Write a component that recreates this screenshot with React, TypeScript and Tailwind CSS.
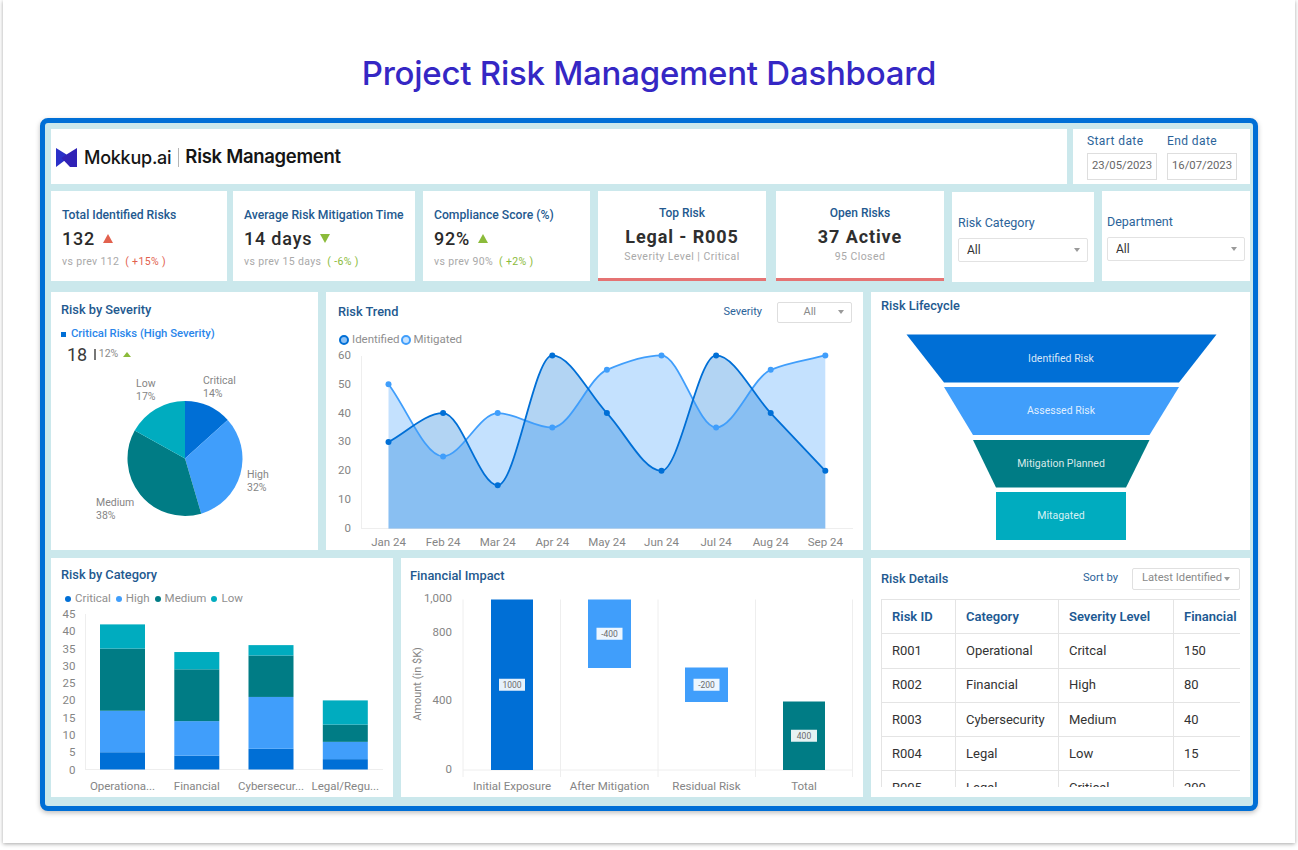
const DARK = '#006fd6';
const LIGHT = '#409efb';
const TEAL = '#007c85';
const CYAN = '#00acbf';

const titleCls = 'font-medium text-[12.8px] text-[#23598f]';

// monotone cubic through the points, flat at local peaks
function spline(pts: number[][]) {
  const n = pts.length;
  const d: number[] = [];
  for (let i = 0; i < n - 1; i++) d.push((pts[i + 1][1] - pts[i][1]) / (pts[i + 1][0] - pts[i][0]));
  const m: number[] = [d[0]];
  for (let i = 1; i < n - 1; i++) m.push(d[i - 1] * d[i] <= 0 ? 0 : (2 * d[i - 1] * d[i]) / (d[i - 1] + d[i]));
  m.push(d[n - 2]);
  let out = `M${pts[0][0]} ${pts[0][1]}`;
  for (let i = 0; i < n - 1; i++) {
    const h = (pts[i + 1][0] - pts[i][0]) / 3;
    out += ` C${pts[i][0] + h} ${pts[i][1] + m[i] * h} ${pts[i + 1][0] - h} ${pts[i + 1][1] - m[i + 1] * h} ${pts[i + 1][0]} ${pts[i + 1][1]}`;
  }
  return out;
}

function Triangle({ color, down }: { color: string; down?: boolean }) {
  return (
    <svg width="10" height="9" viewBox="0 0 10 9" className="shrink-0">
      <polygon points={down ? '0,0 10,0 5,9' : '5,0 10,9 0,9'} fill={color} />
    </svg>
  );
}

function Caret() {
  return (
    <svg width="6" height="4" viewBox="0 0 6 4" className="shrink-0">
      <polygon points="0,0 6,0 3,4" fill="#9a9a9a" />
    </svg>
  );
}

function Kpi({ cls, title, value, color, sub, delta, down }: { cls: string; title: string; value: string; color: string; sub: string; delta: string; down?: boolean }) {
  return (
    <div className={`${cls} bg-white h-full pl-[11px] pt-[16px]`}>
      <div className="font-medium text-[12.2px] text-[#23598f] leading-[16px] whitespace-nowrap">{title}</div>
      <div className="flex items-center gap-[8px] mt-[2px] h-[26px]">
        <span className="font-medium text-[18px] tracking-[0.8px] text-[#2b2b2b]">{value}</span>
        <Triangle color={color} down={down} />
      </div>
      <div className="text-[10.5px] tracking-[0.35px] text-[#a9a9a9] mt-[3px] whitespace-nowrap">
        {sub} <span className="ml-[3px]" style={{ color }}>{delta}</span>
      </div>
    </div>
  );
}

function RedKpi({ cls, title, value, sub }: { cls: string; title: string; value: string; sub: string }) {
  return (
    <div className={`${cls} bg-white h-full border-b-[3px] border-[#e57373] flex flex-col items-center pt-[14px]`}>
      <div className="font-medium text-[12px] text-[#23598f] leading-[16px]">{title}</div>
      <div className="font-bold text-[18px] tracking-[0.9px] text-[#2f2f2f] leading-[26px] mt-[3px]">{value}</div>
      <div className="text-[10.5px] tracking-[0.45px] text-[#a9a9a9] leading-[14px]">{sub}</div>
    </div>
  );
}

function Filter({ cls, label }: { cls: string; label: string }) {
  return (
    <div className={`${cls} bg-white h-full pt-[23px]`}>
      <div className="text-[12.5px] leading-[16px] text-[#2b6399]">{label}</div>
      <div className="mt-[7px] h-[24px] border border-[#e2e2e2] rounded-[2px] flex items-center justify-between pl-[8px] pr-[7px] text-[12px] text-[#333]">
        All <Caret />
      </div>
    </div>
  );
}

function SeverityCard() {
  const cx = 185;
  const cy = 458.5;
  const r = 57.5;
  const slices = [
    { from: 0, to: 48, fill: DARK },
    { from: 48, to: 163.6, fill: LIGHT },
    { from: 163.6, to: 299, fill: TEAL },
    { from: 299, to: 360, fill: CYAN },
  ];
  const at = (deg: number) => {
    const a = (deg * Math.PI) / 180;
    return `${cx + r * Math.sin(a)} ${cy - r * Math.cos(a)}`;
  };
  const labels = [
    ['Critical', '14%', 203, 384],
    ['High', '32%', 247, 478],
    ['Medium', '38%', 96, 506],
    ['Low', '17%', 136, 387],
  ] as const;
  return (
    <div className="w-[267px] h-full bg-white">
      <div className={`${titleCls} pl-[10px] pt-[10px] leading-[16px]`}>Risk by Severity</div>
      <div className="flex items-center pl-[10px] mt-[8px] h-[16px] text-[11.3px] font-medium text-[#2a86ea]">
        <span className="w-[5px] h-[5px] bg-[#006fd6] mr-[5px]" />
        Critical Risks (High Severity)
      </div>
      <div className="flex items-center pl-[16px] h-[22px] mt-[1px]">
        <span className="text-[18px] text-[#3a3a3a]">18</span>
        <span className="w-[1.5px] h-[11px] bg-[#777] ml-[7px] mr-[3px]" />
        <span className="text-[10.5px] text-[#8a8a8a] mr-[5px]">12%</span>
        <svg width="8" height="5" viewBox="0 0 8 5"><polygon points="4,0 8,5 0,5" fill="#8bbb3a" /></svg>
      </div>
      <svg width="267" height="185" viewBox="51 365 267 185" className="block">
        {slices.map((s) => (
          <path key={s.fill} d={`M${cx} ${cy} L${at(s.from)} A${r} ${r} 0 0 1 ${at(s.to)} Z`} fill={s.fill} />
        ))}
        {labels.map(([a, b, x, y]) => (
          <text key={a} x={x} y={y} fontSize="10.5" fill="#858585">
            <tspan x={x}>{a}</tspan>
            <tspan x={x} dy="12.5">{b}</tspan>
          </text>
        ))}
      </svg>
    </div>
  );
}

function TrendCard() {
  const months = ['Jan 24', 'Feb 24', 'Mar 24', 'Apr 24', 'May 24', 'Jun 24', 'Jul 24', 'Aug 24', 'Sep 24'];
  const identified = [30, 40, 15, 60, 40, 20, 60, 40, 20];
  const mitigated = [50, 25, 40, 35, 55, 60, 35, 55, 60];
  const X = (i: number) => 388.5 + i * 54.6;
  const Y = (v: number) => 528.5 - v * 2.885;
  const ptsI = identified.map((v, i) => [X(i), Y(v)]);
  const ptsM = mitigated.map((v, i) => [X(i), Y(v)]);
  const lineI = spline(ptsI);
  const lineM = spline(ptsM);
  const close = ` L${X(8)} 528.5 L${X(0)} 528.5 Z`;
  return (
    <div className="w-[537px] h-full bg-white ml-[8px]">
      <div className="h-[40px] flex items-center pl-[12px] pr-[11px]">
        <span className={titleCls}>Risk Trend</span>
        <span className="ml-auto text-[11px] text-[#2b6399]">Severity</span>
        <div className="ml-[15px] w-[75px] h-[21px] border border-[#dedede] rounded-[2px] flex items-center justify-end pr-[7px] text-[11px] text-[#8a8a8a]">
          <span className="mr-[22px]">All</span>
          <Caret />
        </div>
      </div>
      <div className="h-[16px] flex items-center pl-[13px] text-[11.5px] text-[#8f8f8f]">
        <span className="w-[10px] h-[10px] rounded-full border-[2.5px] border-[#006fd6] bg-[#8fc2f5] mr-[3px]" />
        Identified
        <span className="w-[10px] h-[10px] rounded-full border-[2.5px] border-[#409efb] bg-[#c6e2ff] ml-[1px] mr-[3px]" />
        Mitigated
      </div>
      <svg width="537" height="202" viewBox="326 348 537 202" className="block">
        <line x1="361.5" y1="356" x2="361.5" y2="528.5" stroke="#eeeeee" />
        <line x1="361" y1="528.5" x2="853" y2="528.5" stroke="#eeeeee" />
        <path d={lineM + close} fill="#409efb" fillOpacity="0.31" />
        <path d={lineI + close} fill="#006fd6" fillOpacity="0.3" />
        <path d={lineM} fill="none" stroke={LIGHT} strokeWidth="1.8" />
        <path d={lineI} fill="none" stroke={DARK} strokeWidth="1.8" />
        {ptsM.map((p) => <circle key={p[0]} cx={p[0]} cy={p[1]} r="3" fill={LIGHT} />)}
        {ptsI.map((p) => <circle key={p[0]} cx={p[0]} cy={p[1]} r="3" fill={DARK} />)}
        {[0, 10, 20, 30, 40, 50, 60].map((v) => (
          <text key={v} x="351" y={Y(v) + 3.5} textAnchor="end" fontSize="11.5" fill="#858585">{v}</text>
        ))}
        {months.map((m, i) => (
          <text key={m} x={X(i)} y="546" textAnchor="middle" fontSize="11.5" fill="#858585">{m}</text>
        ))}
      </svg>
    </div>
  );
}

function LifecycleCard() {
  const stages = [
    { label: 'Identified Risk', fill: DARK, pts: '906.5,334.5 1216.5,334.5 1179,382.5 944,382.5', y: 358 },
    { label: 'Assessed Risk', fill: LIGHT, pts: '944,387 1179,387 1149.5,435 973,435', y: 410.5 },
    { label: 'Mitigation Planned', fill: TEAL, pts: '973,440 1149.5,440 1126,487.5 996,487.5', y: 463 },
    { label: 'Mitagated', fill: CYAN, pts: '996,492 1126,492 1126,540 996,540', y: 515.5 },
  ];
  return (
    <div className="w-[379px] h-full bg-white ml-[8px]">
      <div className={`${titleCls} h-[28px] flex items-center pl-[10px]`}>Risk Lifecycle</div>
      <svg width="379" height="230" viewBox="871 320 379 230" className="block">
        {stages.map((s) => (
          <g key={s.label}>
            <polygon points={s.pts} fill={s.fill} />
            <text x="1061" y={s.y + 3.5} textAnchor="middle" fontSize="10.5" fill="#ffffff" fillOpacity="0.85">{s.label}</text>
          </g>
        ))}
      </svg>
    </div>
  );
}

function CategoryCard() {
  const cats = [
    { name: 'Operationa...', x: 100, v: [5, 12, 18, 7] },
    { name: 'Financial', x: 174.3, v: [4, 10, 15, 5] },
    { name: 'Cybersecur...', x: 248.5, v: [6, 15, 12, 3] },
    { name: 'Legal/Regu...', x: 322.8, v: [3, 5, 5, 7] },
  ];
  const fills = [DARK, LIGHT, TEAL, CYAN];
  const base = 769.5;
  const unit = 3.455;
  const legend = [['Critical', DARK], ['High', LIGHT], ['Medium', TEAL], ['Low', CYAN]];
  return (
    <div className="w-[342px] h-full bg-white">
      <div className={`${titleCls} h-[34px] flex items-center pl-[10px]`}>Risk by Category</div>
      <div className="h-[12px] mt-[1px] flex items-center pl-[14px] gap-[5px] text-[11.5px] text-[#8f8f8f]">
        {legend.map(([name, color]) => (
          <span key={name} className="flex items-center gap-[4px]">
            <span className="w-[6px] h-[6px] rounded-full" style={{ backgroundColor: color }} />
            {name}
          </span>
        ))}
      </div>
      <svg width="342" height="192" viewBox="51 605 342 192" className="block">
        <line x1="85.5" y1="614" x2="85.5" y2={base} stroke="#eeeeee" />
        <line x1="85" y1={base} x2="383" y2={base} stroke="#eeeeee" />
        {cats.map((c) => {
          let top = base;
          return (
            <g key={c.name}>
              {c.v.map((v, i) => {
                top -= v * unit;
                return <rect key={i} x={c.x} y={top} width="45" height={v * unit} fill={fills[i]} />;
              })}
              <text x={c.x + 22.5} y="790" textAnchor="middle" fontSize="11.5" fill="#858585">{c.name}</text>
            </g>
          );
        })}
        {[0, 5, 10, 15, 20, 25, 30, 35, 40, 45].map((v) => (
          <text key={v} x="75.5" y={base - v * unit + 4} textAnchor="end" fontSize="11.5" fill="#858585">{v}</text>
        ))}
      </svg>
    </div>
  );
}

function ImpactCard() {
  const bars = [
    { name: 'Initial Exposure', x: 491, w: 42, y: 599.5, b: 770, fill: DARK, tag: '1000' },
    { name: 'After Mitigation', x: 588, w: 43, y: 599.5, b: 668, fill: LIGHT, tag: '-400' },
    { name: 'Residual Risk', x: 685, w: 43, y: 667.5, b: 702, fill: LIGHT, tag: '-200' },
    { name: 'Total', x: 783, w: 42, y: 701.5, b: 770, fill: TEAL, tag: '400' },
  ];
  const grid = [463, 560.5, 658, 755.5, 852.5];
  const ticks = [['1,000', 602], ['800', 636], ['400', 704], ['0', 773]] as const;
  return (
    <div className="w-[462px] h-full bg-white ml-[8px]">
      <div className={`${titleCls} h-[36px] flex items-center pl-[9px]`}>Financial Impact</div>
      <svg width="462" height="203" viewBox="401 594 462 203" className="block overflow-visible">
        {grid.map((x) => <line key={x} x1={x} y1="599.5" x2={x} y2="777" stroke="#eeeeee" />)}
        <line x1="463" y1="770" x2="853" y2="770" stroke="#eeeeee" />
        {bars.map((b) => {
          const cx = b.x + b.w / 2;
          const cy = (b.y + b.b) / 2;
          return (
            <g key={b.name}>
              <rect x={b.x} y={b.y} width={b.w} height={b.b - b.y} fill={b.fill} />
              <rect x={cx - 13} y={cy - 6} width="26" height="12" fill="#ffffff" fillOpacity="0.9" />
              <text x={cx} y={cy + 3} textAnchor="middle" fontSize="8.5" fill="#6b6b6b">{b.tag}</text>
              <text x={cx} y="790" textAnchor="middle" fontSize="11.5" fill="#858585">{b.name}</text>
            </g>
          );
        })}
        {ticks.map(([t, y]) => (
          <text key={t} x="452" y={y} textAnchor="end" fontSize="11.5" fill="#858585">{t}</text>
        ))}
        <text x="421" y="684" transform="rotate(-90 421 684)" textAnchor="middle" fontSize="11" fill="#858585">Amount (in $K)</text>
      </svg>
    </div>
  );
}

function DetailsCard() {
  const rows = [
    ['R001', 'Operational', 'Critcal', '150'],
    ['R002', 'Financial', 'High', '80'],
    ['R003', 'Cybersecurity', 'Medium', '40'],
    ['R004', 'Legal', 'Low', '15'],
    ['R005', 'Legal', 'Critical', '200'],
  ];
  const head = ['Risk ID', 'Category', 'Severity Level', 'Financial'];
  return (
    <div className="w-[379px] h-full bg-white ml-[8px]">
      <div className="h-[41px] flex items-center pl-[10px] pr-[10px]">
        <span className={titleCls}>Risk Details</span>
        <span className="ml-auto text-[11.2px] text-[#2b6399]">Sort by</span>
        <div className="ml-[14px] w-[108px] h-[22px] border border-[#e0e0e0] rounded-[2px] flex items-center justify-center gap-[2px] text-[11.2px] text-[#8a8a8a]">
          Latest Identified <Caret />
        </div>
      </div>
      <div className="ml-[10px] w-[359px] h-[188px] overflow-hidden">
        <table className="table-fixed w-[480px] border-collapse text-[13px] text-[#333]">
          <colgroup>
            <col className="w-[74px]" />
            <col className="w-[103px]" />
            <col className="w-[115px]" />
            <col className="w-[188px]" />
          </colgroup>
          <thead>
            <tr className="h-[34.3px]">
              {head.map((h) => (
                <th key={h} className="border-[1.5px] border-[#e4e4e4] pl-[10px] text-left font-semibold text-[#1d5a93] whitespace-nowrap">{h}</th>
              ))}
            </tr>
          </thead>
          <tbody>
            {rows.map((r) => (
              <tr key={r[0]} className="h-[34.3px]">
                {r.map((c, i) => (
                  <td key={i} className="border-[1.5px] border-[#e4e4e4] pl-[10px]">{c}</td>
                ))}
              </tr>
            ))}
          </tbody>
        </table>
      </div>
    </div>
  );
}

export default function App() {
  return (
    <div className="h-[850px] bg-white font-['Roboto',sans-serif]">
      <div className="mx-[3px] w-[1292px] h-[843px] bg-white shadow-[0_1px_4px_rgba(0,0,0,0.35)] pt-[52px]">
        <h1 className="font-['Inter',sans-serif] font-medium text-[33px] leading-[42px] text-center text-[#3527c4] tracking-[-0.25px]">
          Project Risk Management Dashboard
        </h1>
        <div className="ml-[37px] mt-[24px] w-[1218px] h-[693px] border-[5px] border-[#006fd6] rounded-[8px] bg-[#cbe8ec] pl-[6px] pr-[3px] py-[6px] shadow-[0_2px_5px_rgba(0,0,0,0.25)] flex flex-col">
          <div className="flex h-[55px]">
            <div className="w-[1016px] bg-white flex items-center pl-[5px] pt-[1px]">
              <svg width="21" height="19" viewBox="0 0 21 19" className="shrink-0">
                <path d="M0 0 L10.5 6.5 L10 13 L8 13 L0 19 Z" fill="#2a30c8" />
                <path d="M21 0 L10.5 6.5 L5.5 10 L14 19 L21 19 Z" fill="#3022b6" />
              </svg>
              <span className="font-['Inter',sans-serif] font-medium text-[18px] text-[#151515] ml-[7px] tracking-[-0.25px]">Mokkup.ai</span>
              <span className="w-px h-[19px] bg-[#b5b5b5] ml-[7px] mr-[6px]" />
              <span className="font-['Inter',sans-serif] font-semibold text-[18.5px] text-[#151515] tracking-[-0.3px]">Risk Management</span>
            </div>
            <div className="w-[177px] ml-[6px] bg-white pl-[14px] pt-[4px] flex gap-[10px]">
              {[['Start date', '23/05/2023'], ['End date', '16/07/2023']].map(([l, v]) => (
                <div key={l} className="w-[70px]">
                  <div className="text-[12px] leading-[16px] tracking-[0.4px] text-[#2b6399]">{l}</div>
                  <div className="mt-[4px] h-[27px] border border-[#dedede] flex items-center justify-center text-[11.3px] text-[#666]">{v}</div>
                </div>
              ))}
            </div>
          </div>
          <div className="flex h-[90px] mt-[7px]">
            <Kpi cls="w-[176px]" title="Total Identified Risks" value="132" color="#e2614e" sub="vs prev 112" delta="( +15% )" />
            <Kpi cls="w-[182px] ml-[6px]" title="Average Risk Mitigation Time" value="14 days" color="#8bbb3a" down sub="vs prev 15 days" delta="( -6% )" />
            <Kpi cls="w-[167px] ml-[8px]" title="Compliance Score (%)" value="92%" color="#8bbb3a" sub="vs prev 90%" delta="( +2% )" />
            <RedKpi cls="w-[168px] ml-[8px]" title="Top Risk" value="Legal - R005" sub="Severity Level | Critical" />
            <RedKpi cls="w-[168px] ml-[10px]" title="Open Risks" value="37 Active" sub="95 Closed" />
            <Filter cls="w-[142px] ml-[8px] pl-[6px] pr-[6px] mt-[1px]" label="Risk Category" />
            <Filter cls="w-[148px] ml-[8px] pl-[5px] pr-[5px]" label="Department" />
          </div>
          <div className="flex h-[258px] mt-[11px]">
            <SeverityCard />
            <TrendCard />
            <LifecycleCard />
          </div>
          <div className="flex h-[239px] mt-[8px]">
            <CategoryCard />
            <ImpactCard />
            <DetailsCard />
          </div>
        </div>
      </div>
    </div>
  );
}
